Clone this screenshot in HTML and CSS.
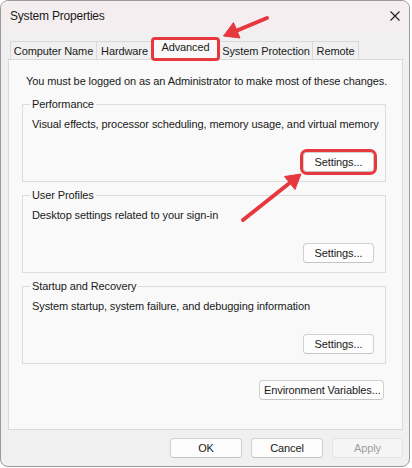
FILE: index.html
```html
<!DOCTYPE html>
<html>
<head>
<meta charset="utf-8">
<link rel="stylesheet" href="styles.css">
</head>
<body>
<div class="window">
  <div class="titlebar">
    <span class="title">System Properties</span>
    <svg class="close" width="10" height="10" viewBox="0 0 10 10"><path d="M0.5 0.5 L9.5 9.5 M9.5 0.5 L0.5 9.5" stroke="#1c1c1c" stroke-width="1.1" fill="none"/></svg>
  </div>
  <div class="content">
    <div class="tabs">
      <div class="tab t-name">Computer Name</div>
      <div class="tab t-hw">Hardware</div>
      <div class="tab t-adv selected">Advanced</div>
      <div class="tab t-sp">System Protection</div>
      <div class="tab t-rem">Remote</div>
    </div>
    <div class="panel">
      <p class="notice">You must be logged on as an Administrator to make most of these changes.</p>
      <fieldset class="group">
        <legend>Performance</legend>
        <p class="desc">Visual effects, processor scheduling, memory usage, and virtual memory</p>
        <div class="row"><button class="btn highlight">Settings...</button></div>
      </fieldset>
      <fieldset class="group">
        <legend>User Profiles</legend>
        <p class="desc">Desktop settings related to your sign-in</p>
        <div class="row"><button class="btn">Settings...</button></div>
      </fieldset>
      <fieldset class="group">
        <legend>Startup and Recovery</legend>
        <p class="desc">System startup, system failure, and debugging information</p>
        <div class="row"><button class="btn">Settings...</button></div>
      </fieldset>
      <div class="env-row"><button class="btn env">Environment Variables...</button></div>
    </div>
    <div class="footer">
      <button class="btn fbtn">OK</button>
      <button class="btn fbtn">Cancel</button>
      <button class="btn fbtn disabled">Apply</button>
    </div>
  </div>
  <svg class="arrows" width="410" height="467" viewBox="0 0 410 467">
    <g fill="#e8383f" stroke="#e8383f">
      <line x1="266" y1="17" x2="234" y2="30.4" stroke-width="4" stroke-linecap="round"/>
      <polygon points="222.5,35 239,37 232.5,21.5" stroke-width="1" stroke-linejoin="round"/>
      <line x1="242" y1="219" x2="288" y2="182.5" stroke-width="4" stroke-linecap="round"/>
      <polygon points="300,173 294,188.5 283.5,175.5" stroke-width="1" stroke-linejoin="round"/>
    </g>
  </svg>
</div>
</body>
</html>
```
FILE: styles.css
```css
* { box-sizing: border-box; }
html, body { margin: 0; padding: 0; background: #ffffff; }
body {
  font-family: "Liberation Sans", Arial, sans-serif;
  font-size: 11px;
  letter-spacing: -0.1px;
  line-height: 15px;
  color: #1a1a1a;
}
.window {
  position: relative;
  width: 410px;
  height: 467px;
  border: 1px solid #9a9a9a;
  border-radius: 8px;
  overflow: hidden;
  background: #f0f0f0;
  display: flex;
  flex-direction: column;
}
.titlebar {
  height: 30px;
  flex: none;
  display: flex;
  align-items: center;
  justify-content: space-between;
  padding: 0 9px 0 9px;
  background: #f5eef0;
}
.title { font-size: 12px; letter-spacing: -0.2px; color: #1a1a1a; }
.close { display: block; }
.content {
  flex: 1;
  display: flex;
  flex-direction: column;
  padding: 10px 6px 0 7px;
}
.tabs {
  display: flex;
  height: 18px;
  padding-left: 2px;
  flex: none;
}
.tab {
  height: 18px;
  border: 1px solid #d9d9d9;
  border-bottom: none;
  border-right: none;
  background: #f0f0f0;
  padding: 2px 0 0;
  text-align: center;
  white-space: nowrap;
  color: #1a1a1a;
}
.t-name { width: 86px; }
.t-hw { width: 56px; }
.t-adv { width: 67px; }
.t-sp { width: 93px; }
.t-rem { width: 47px; border-right: 1px solid #d9d9d9; }
.tab.selected {
  position: relative;
  z-index: 2;
  height: 22px;
  margin-top: -3px;
  margin-bottom: -1px;
  padding-top: 2px;
  background: #f9f9f9;
  outline: 3px solid #e8383f;
  outline-offset: -2px;
  border-radius: 3px;
  border: none;
}
.panel {
  flex: none;
  height: 371px;
  background: #f9f9f9;
  border: 1px solid #d9d9d9;
  padding: 14px 16px 0 13px;
}
.notice { margin: 0 0 0 4px; white-space: nowrap; }
.group {
  margin: 8px 0 0 0;
  padding: 5px 11px 9px 9px;
  border: 1px solid #dcdcdc;
  min-width: 0;
}
.group + .group { margin-top: 6px; }
.group legend {
  padding: 0 2px;
  margin-left: -2px;
}
.desc { margin: 0; white-space: nowrap; }
.row {
  display: flex;
  justify-content: flex-end;
  margin-top: 20px;
}
.btn {
  font: inherit;
  letter-spacing: inherit;
  color: #1a1a1a;
  height: 20px;
  padding: 0 4px;
  background: #fdfdfd;
  border: 1px solid #d0d0d0;
  border-bottom-color: #c4c4c4;
  border-radius: 4px;
  line-height: 17px;
  white-space: nowrap;
}
.row .btn { width: 71px; }
.highlight {
  outline: 3px solid #e8383f;
  outline-offset: 0;
}
.env-row {
  display: flex;
  justify-content: flex-end;
  margin-top: 16px;
  padding-right: 2px;
}
.env { width: 125px; }
.footer {
  display: flex;
  justify-content: flex-end;
  gap: 9px;
  padding-top: 8px;
}
.fbtn { width: 72px; }
.fbtn.disabled {
  width: 71px;
  color: #a0a0a0;
  background: #f5f5f5;
  border-color: #e3e3e3;
}
.arrows {
  position: absolute;
  left: 0;
  top: 0;
  pointer-events: none;
  z-index: 5;
}
```
